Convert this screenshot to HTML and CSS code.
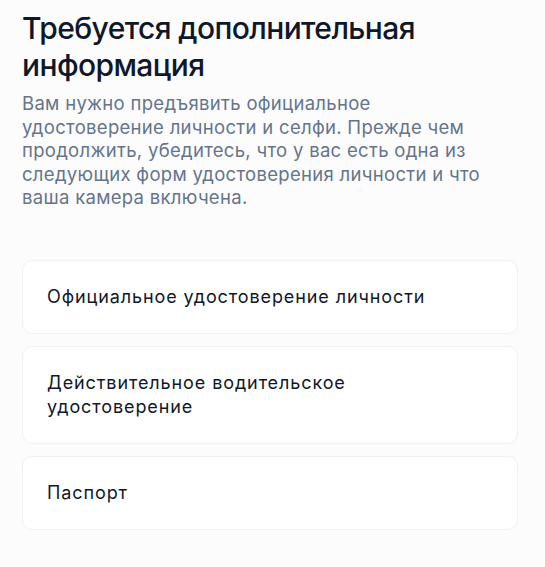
FILE: index.html
```html
<!DOCTYPE html>
<html lang="ru">
<head>
  <meta charset="UTF-8">
  <title>Требуется дополнительная информация</title>
  <meta name="viewport" content="width=device-width, initial-scale=1.0">
  <link rel="stylesheet" href="styles.css">
</head>
<body>
  <div class="page">
    <h1 class="title">Требуется дополнительная информация</h1>
    <p class="intro">Вам нужно предъявить официальное удостоверение личности и селфи. Прежде чем продолжить, убедитесь, что у вас есть одна из следующих форм удостоверения личности и что ваша камера включена.</p>

    <div class="options">
      <div class="option">Официальное удостоверение личности</div>
      <div class="option">Действительное водительское<br>удостоверение</div>
      <div class="option">Паспорт</div>
    </div>
  </div>
</body>
</html>
```

FILE: styles.css
```css
body {
  margin: 0;
  background: #fcfcfd;
  font-family: Inter, 'Noto Sans', Arial, sans-serif;
}
.page {
  padding: 10px 27px 20px 22px;
}
.title {
  margin: 0;
  font-size: 30px;
  line-height: 37px;
  font-weight: 500;
  color: #0f172a;
  letter-spacing: -0.6px;
}
.intro {
  margin: 8px 0 0 0;
  font-size: 18.5px;
  line-height: 23.5px;
  color: #64748b;
  letter-spacing: 0.3px;
  max-width: 468px;
}
.options {
  display: flex;
  flex-direction: column;
  gap: 12px;
  margin-top: 50px;
}
.option {
  background: #fff;
  border: 1px solid #f0f1f4;
  border-radius: 10px;
  padding: 24px 24px;
  font-size: 18px;
  line-height: 24px;
  letter-spacing: 0.9px;
  color: #0f172a;
}
```
